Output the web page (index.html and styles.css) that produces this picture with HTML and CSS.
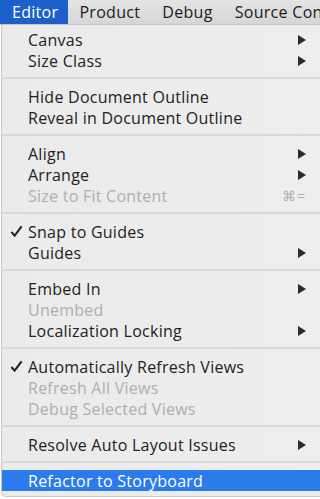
FILE: index.html
```html
<!DOCTYPE html>
<html lang="en">
<head>
  <meta charset="UTF-8" />
  <title>Editor menu</title>
  <link rel="stylesheet" href="styles.css">
</head>
<body>
  <div class="menubar">
    <span class="menu-title activo">Editor</span>
    <span class="menu-title">Product</span>
    <span class="menu-title">Debug</span>
    <span class="menu-title">Source Control</span>
  </div>

  <div class="menu">
    <div class="item"><span class="check"></span><span class="label">Canvas</span><svg class="arrow" viewBox="0 0 8 10"><polygon points="0,0 8,5 0,10"/></svg></div>
    <div class="item"><span class="check"></span><span class="label">Size Class</span><svg class="arrow" viewBox="0 0 8 10"><polygon points="0,0 8,5 0,10"/></svg></div>
    <div class="sep"></div>
    <div class="item"><span class="check"></span><span class="label">Hide Document Outline</span></div>
    <div class="item"><span class="check"></span><span class="label">Reveal in Document Outline</span></div>
    <div class="sep"></div>
    <div class="item"><span class="check"></span><span class="label">Align</span><svg class="arrow" viewBox="0 0 8 10"><polygon points="0,0 8,5 0,10"/></svg></div>
    <div class="item"><span class="check"></span><span class="label">Arrange</span><svg class="arrow" viewBox="0 0 8 10"><polygon points="0,0 8,5 0,10"/></svg></div>
    <div class="item inactivo"><span class="check"></span><span class="label">Size to Fit Content</span><span class="shortcut">⌘=</span></div>
    <div class="sep"></div>
    <div class="item"><span class="check"><svg viewBox="0 0 14 14"><path d="M1.5 7.5 L5 11.5 L12.5 1.5"/></svg></span><span class="label">Snap to Guides</span></div>
    <div class="item"><span class="check"></span><span class="label">Guides</span><svg class="arrow" viewBox="0 0 8 10"><polygon points="0,0 8,5 0,10"/></svg></div>
    <div class="sep"></div>
    <div class="item"><span class="check"></span><span class="label">Embed In</span><svg class="arrow" viewBox="0 0 8 10"><polygon points="0,0 8,5 0,10"/></svg></div>
    <div class="item inactivo"><span class="check"></span><span class="label">Unembed</span></div>
    <div class="item"><span class="check"></span><span class="label">Localization Locking</span><svg class="arrow" viewBox="0 0 8 10"><polygon points="0,0 8,5 0,10"/></svg></div>
    <div class="sep"></div>
    <div class="item"><span class="check"><svg viewBox="0 0 14 14"><path d="M1.5 7.5 L5 11.5 L12.5 1.5"/></svg></span><span class="label">Automatically Refresh Views</span></div>
    <div class="item inactivo"><span class="check"></span><span class="label">Refresh All Views</span></div>
    <div class="item inactivo"><span class="check"></span><span class="label">Debug Selected Views</span></div>
    <div class="sep"></div>
    <div class="item"><span class="check"></span><span class="label">Resolve Auto Layout Issues</span><svg class="arrow" viewBox="0 0 8 10"><polygon points="0,0 8,5 0,10"/></svg></div>
    <div class="sep"></div>
    <div class="item seleccionado"><span class="check"></span><span class="label">Refactor to Storyboard</span></div>
  </div>
</body>
</html>
```

FILE: styles.css
```css
body {
  margin: 0;
  background-color: #ffffff;
  font-family: 'Open Sans', 'Noto Sans', sans-serif;
  color: #222;
  overflow: hidden;
}
.menubar {
  display: flex;
  height: 25px;
  background: linear-gradient(#e4e4e4, #d6d6d6);
  border-bottom: 1px solid #c4c4c4;
  box-sizing: border-box;
  white-space: nowrap;
  overflow: hidden;
}
.menu-title {
  display: flex;
  align-items: center;
  padding: 0 11px 0 11px;
  font-size: 16px;
  letter-spacing: 0.3px;
  color: #1c1c1c;
}
.menu-title.activo {
  background-color: #1d60c9;
  color: #fff;
  padding: 0 10px 0 12px;
}
.menu {
  margin-left: 1px;
  margin-right: -12px;
  padding: 4px 0 5px 0;
  background: linear-gradient(90deg, #ebebeb, #eeeeee);
  border-left: 1px solid #c8c8c8;
  border-bottom: 1px solid #c8c8c8;
  border-radius: 0 0 5px 5px;
  height: 472px;
  box-sizing: border-box;
}
.item {
  display: flex;
  align-items: center;
  height: 21px;
  padding: 0 26px 0 7px;
  font-size: 16px;
  letter-spacing: 0.25px;
  color: #222;
}
.item.inactivo {
  color: #aeaeae;
}
.item.seleccionado {
  background-color: #2b7bec;
  color: #fff;
}
.check {
  width: 19px;
  display: flex;
  align-items: center;
  margin-left: 1px;
  margin-right: -1px;
}
.check svg {
  width: 13px;
  height: 13px;
  fill: none;
  stroke: #222;
  stroke-width: 2.2;
}
.label {
  flex: 1;
  white-space: nowrap;
}
.arrow {
  width: 8px;
  height: 10px;
  fill: #2a2a2a;
}
.shortcut {
  font-size: 14px;
  letter-spacing: 1px;
  margin-right: 0;
}
.sep {
  height: 2px;
  margin: 6px 0 7px 0;
  background-color: #d9d9d9;
}
```
